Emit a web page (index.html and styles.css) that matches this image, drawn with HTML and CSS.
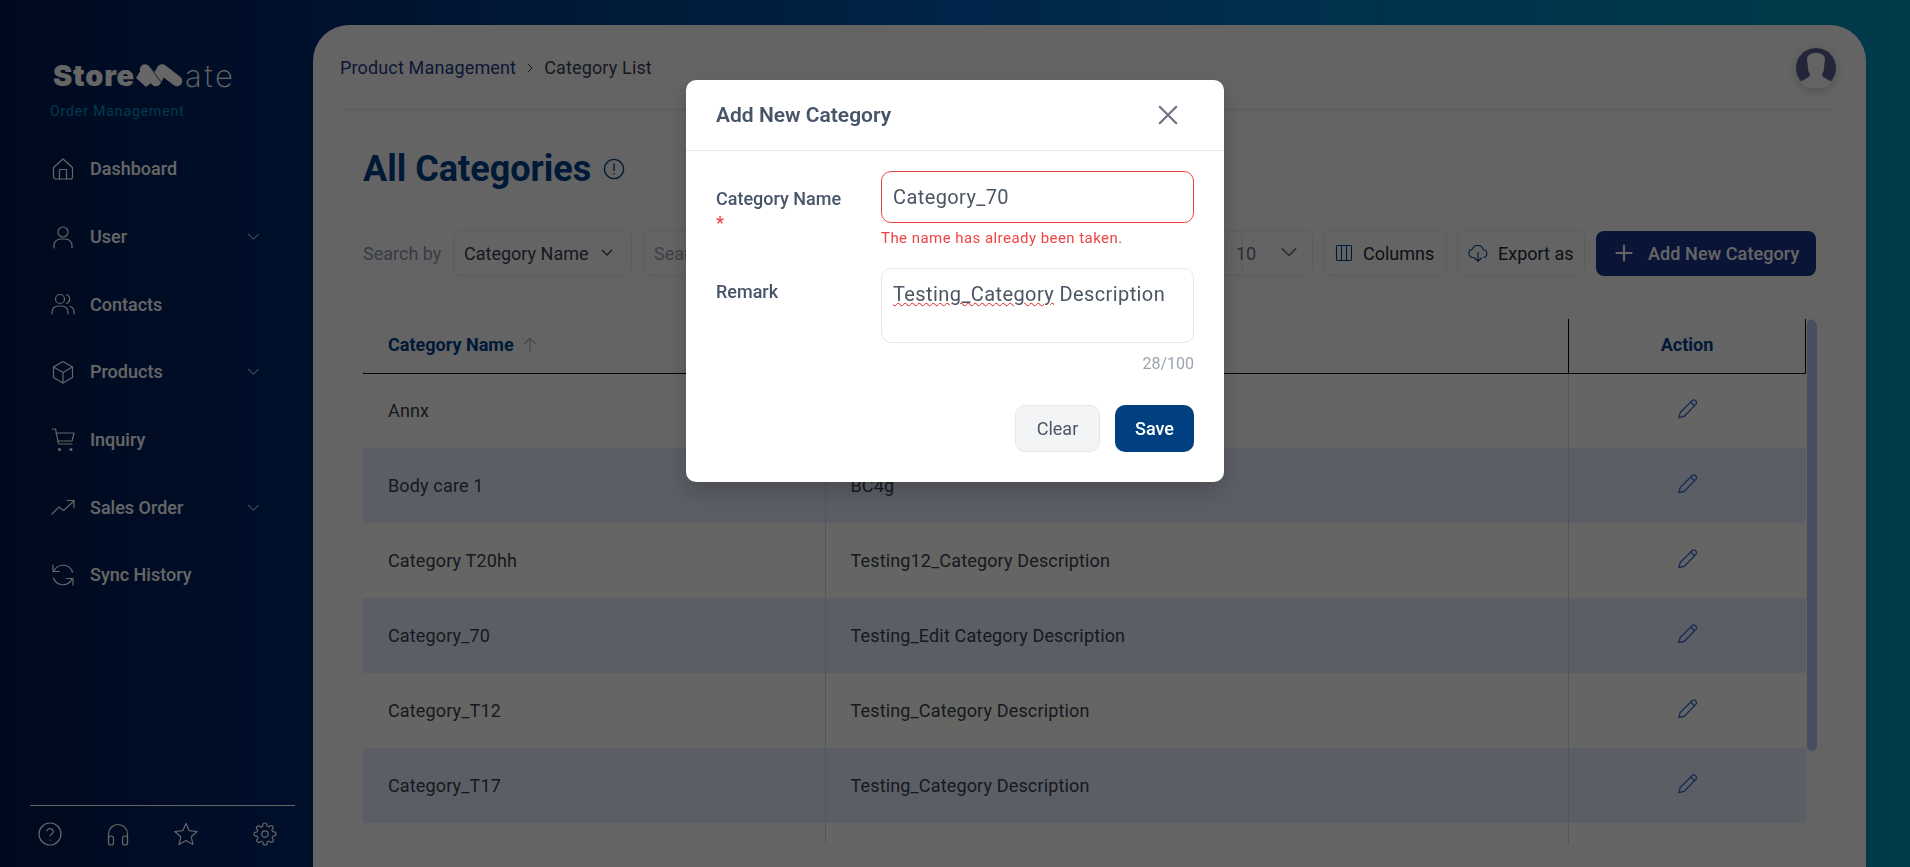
FILE: index.html
```html
<!DOCTYPE html>
<html lang="en">
<head>
    <meta charset="UTF-8">
    <meta name="viewport" content="width=device-width, initial-scale=1.0">
    <title>All Categories</title>
    <link rel="stylesheet" href="styles.css">
</head>
<body>
    <aside class="sidebar">
        <div class="logo">
            <span class="logo-store">Store</span>
            <svg class="logo-mark" viewBox="0 0 48 24"><path class="logo-band" d="M9 6.500 20 18M26 6.500 41 18M20 18l6-11.500"/><path class="logo-wedge" d="M0 15 8 2l7 18-5 4z"/><path class="logo-cut" d="M14 4l11 15"/></svg>
            <span class="logo-ate">ate</span>
        </div>
        <div class="logo-sub">Order Management</div>
        <nav class="nav">
            <a class="nav-item">
                <svg class="icon" viewBox="0 0 24 24"><path d="M2.500 10.500 12 2l9.500 8.500V20a2 2 0 0 1-2 2h-15a2 2 0 0 1-2-2z"/><path d="M8.500 22V12.500h7V22"/></svg>
                <span>Dashboard</span>
            </a>
            <a class="nav-item">
                <svg class="icon" viewBox="0 0 24 24"><circle cx="12" cy="7" r="5"/><path d="M3 23v-2.500a6.500 6.500 0 0 1 6.500-6.500h5a6.500 6.500 0 0 1 6.500 6.500V23"/></svg>
                <span>User</span>
                <svg class="nav-caret" viewBox="0 0 24 24"><path d="m3 8 9 9 9-9"/></svg>
            </a>
            <a class="nav-item">
                <svg class="icon" viewBox="0 0 24 24"><circle cx="9" cy="7" r="4.500"/><path d="M1 22v-2a6 6 0 0 1 6-6h4a6 6 0 0 1 6 6v2"/><path d="M15.500 2.700a4.500 4.500 0 0 1 0 8.600"/><path d="M19 14.300a6 6 0 0 1 4 5.700v2"/></svg>
                <span>Contacts</span>
            </a>
            <a class="nav-item">
                <svg class="icon" viewBox="0 0 24 24"><path d="M12 1.500 21.500 7v10.500L12 23l-9.500-5.500V7z"/><path d="M2.500 7 12 12.500 21.500 7M12 12.500V23"/></svg>
                <span>Products</span>
                <svg class="nav-caret" viewBox="0 0 24 24"><path d="m3 8 9 9 9-9"/></svg>
            </a>
            <a class="nav-item">
                <svg class="icon" viewBox="0 0 24 24"><path d="M1 1h3.500L7.500 16h13.500"/><path d="M5 5h18l-2 8H6.800"/><circle class="dot" cx="8.500" cy="21.500" r="1"/><circle class="dot" cx="20" cy="21.500" r="1"/></svg>
                <span>Inquiry</span>
            </a>
            <a class="nav-item">
                <svg class="icon" viewBox="0 0 24 24"><path d="m1 19 7-7 4.500 3.500L23 6"/><path d="M16 5.500h7v7"/></svg>
                <span>Sales Order</span>
                <svg class="nav-caret" viewBox="0 0 24 24"><path d="m3 8 9 9 9-9"/></svg>
            </a>
            <a class="nav-item">
                <svg class="icon" viewBox="0 0 24 24"><path d="M2 2v6.500h6.500"/><path d="M22 22v-6.500h-6.500"/><path d="M2.500 15a10 10 0 0 0 18.500 1"/><path d="M21.500 9A10 10 0 0 0 3 8"/></svg>
                <span>Sync History</span>
            </a>
        </nav>
        <div class="side-foot">
            <svg class="icon" viewBox="0 0 24 24"><circle cx="12" cy="12" r="11"/><path d="M8.800 8.800a3.300 3.300 0 0 1 6.400 1c0 2.200-3.200 2.500-3.200 4.200"/><path d="M12 18v.2"/></svg>
            <svg class="icon" viewBox="0 0 24 24"><path d="M2.500 21v-9a9.500 9.500 0 0 1 19 0v9"/><rect x="2.500" y="14" width="5" height="9" rx="2.300"/><rect x="16.500" y="14" width="5" height="9" rx="2.300"/></svg>
            <svg class="icon" viewBox="0 0 24 24"><path d="m12 1.500 3.200 7.200 8 .8-6 5.300 1.800 7.700-7-4-7 4 1.800-7.700-6-5.300 8-.8z"/></svg>
            <svg class="icon foot-gear" viewBox="0 0 24 24"><circle cx="12" cy="12" r="3.200"/><path d="M19.400 15a1.650 1.650 0 0 0 .33 1.820l.06.06a2 2 0 1 1-2.830 2.830l-.06-.06a1.650 1.650 0 0 0-2.800 1.170V21a2 2 0 0 1-4 0v-.09a1.650 1.650 0 0 0-2.800-1.110l-.06.06a2 2 0 1 1-2.830-2.830l.06-.06a1.650 1.650 0 0 0-1.170-2.800H3a2 2 0 0 1 0-4h.09a1.650 1.650 0 0 0 1.110-2.800l-.06-.06a2 2 0 1 1 2.830-2.830l.06.06a1.650 1.650 0 0 0 2.800-1.170V3a2 2 0 0 1 4 0v.09a1.650 1.650 0 0 0 2.800 1.110l.06-.06a2 2 0 1 1 2.830 2.830l-.06.06a1.650 1.650 0 0 0 1.170 2.800H21a2 2 0 0 1 0 4h-.09a1.650 1.650 0 0 0-1.510 1.170z"/></svg>
        </div>
    </aside>

    <main class="panel">
        <header class="topbar">
            <div class="crumbs">
                <span class="crumb-link">Product Management</span>
                <svg class="crumb-sep" viewBox="0 0 24 24"><path d="m8 4 8 8-8 8"/></svg>
                <span>Category List</span>
            </div>
            <div class="avatar">
                <svg viewBox="0 0 40 40"><circle class="avatar-bg" cx="20" cy="20" r="20"/><path class="avatar-man" d="M11 11c0-4 4-6 9-6s9 2 9 6l-1 9c0 3-1 5-2 6 0 2 1 3 3 4l7 4a20 20 0 0 1-32 0l7-4c2-1 3-2 3-4-1-1-2-3-2-6z"/></svg>
            </div>
        </header>

        <div class="title-row">
            <h1>All Categories</h1>
            <svg class="title-info" viewBox="0 0 24 24"><circle cx="12" cy="12" r="10.500"/><path d="M12 6.500v7M12 17v.5"/></svg>
        </div>

        <div class="toolbar">
            <span class="search-label">Search by</span>
            <div class="box select-by">Category Name
                <svg class="caret" viewBox="0 0 24 24"><path d="m5 8 7 7 7-7"/></svg>
            </div>
            <div class="box search">Search</div>
            <div class="box select-size">10
                <svg class="caret" viewBox="0 0 24 24"><path d="m4 7 8 8 8-8"/></svg>
            </div>
            <div class="box tool tool-columns">
                <svg class="tool-icon" viewBox="0 0 24 24"><rect x="3" y="3" width="18" height="18" rx="1.500"/><path d="M9 3v18M15 3v18"/></svg>
                Columns
            </div>
            <div class="box tool tool-export">
                <svg class="tool-icon" viewBox="0 0 24 24"><path d="M7 17.500H6a5 5 0 0 1-.8-9.900A7 7 0 0 1 18.500 8 4.800 4.800 0 0 1 19 17.400"/><path d="M12 11v11M8 18l4 4 4-4"/></svg>
                Export as
            </div>
            <button class="add-btn">
                <svg class="plus" viewBox="0 0 24 24"><path d="M12 3v18M3 12h18"/></svg>
                Add New Category
            </button>
        </div>

        <div class="table-wrap">
            <div class="scroll-thumb"></div>
            <table class="table">
                <thead>
                    <tr>
                        <th class="col-name">Category Name
                            <svg class="sort" viewBox="0 0 24 24"><path d="M12 21V3M4 11l8-8 8 8"/></svg>
                        </th>
                        <th class="col-remark"></th>
                        <th class="col-action">Action</th>
                    </tr>
                </thead>
                <tbody id="rows"></tbody>
            </table>
        </div>
    </main>

    <div class="overlay">
        <div class="modal">
            <div class="modal-head">
                <h2>Add New Category</h2>
                <svg class="close" viewBox="0 0 24 24"><path d="M3 3l18 18M21 3 3 21"/></svg>
            </div>
            <div class="modal-body">
                <div class="field">
                    <label class="field-label">Category Name <span class="req">*</span></label>
                    <div class="field-main">
                        <div class="input input-error">Category_70</div>
                        <div class="error">The name has already been taken.</div>
                    </div>
                </div>
                <div class="field field-remark">
                    <label class="field-label">Remark</label>
                    <div class="field-main">
                        <div class="input textarea"><span class="typo">Testing_Category</span> Description</div>
                        <div class="counter">28/100</div>
                    </div>
                </div>
                <div class="modal-actions">
                    <button class="btn-clear">Clear</button>
                    <button class="btn-save">Save</button>
                </div>
            </div>
        </div>
    </div>

    <script>
        const rows = [
            ["Annx", ""],
            ["Body care 1", "BC4g"],
            ["Category T20hh", "Testing12_Category Description"],
            ["Category_70", "Testing_Edit Category Description"],
            ["Category_T12", "Testing_Category Description"],
            ["Category_T17", "Testing_Category Description"],
            ["", ""]
        ];
        const pencil = '<svg class="pencil" viewBox="0 0 24 24"><path d="M17 3.500a3 3 0 0 1 4 4L8 21l-6 1.500L3.500 17z"/><path d="m15 5.500 4 4"/></svg>';
        document.getElementById("rows").innerHTML = rows.map((r) =>
            `<tr><td>${r[0]}</td><td>${r[1]}</td><td class="cell-action">${r[0] ? pencil : ""}</td></tr>`
        ).join("");
    </script>
</body>
</html>
```

FILE: styles.css
```css
* {
    box-sizing: border-box;
}
html, body {
    height: 100%;
}
body {
    margin: 0;
    height: 867px;
    overflow: hidden;
    display: flex;
    font-family: Roboto, "Liberation Sans", sans-serif;
    background: linear-gradient(90deg, #00286e 13%, #00509f 42%, #005cb8 50%, #0078c0 68%, #0094b8 100%);
    color: #374151;
}
svg {
    fill: none;
    stroke: currentColor;
    stroke-linecap: round;
    stroke-linejoin: round;
}

/* sidebar */
.sidebar {
    width: 313px;
    flex-shrink: 0;
    display: flex;
    flex-direction: column;
    background: linear-gradient(90deg, #001a4c 0%, #00286e 100%);
    color: #fff;
}
.logo {
    display: flex;
    align-items: center;
    height: 30px;
    margin: 60px 0 0 53px;
}
.logo-store {
    width: 83px;
    flex-shrink: 0;
    font-family: Inter, Roboto, sans-serif;
    font-size: 29px;
    font-weight: 900;
    letter-spacing: 0.8px;
}
.logo-mark {
    width: 48px;
    height: 24px;
    flex-shrink: 0;
}
.logo-band {
    stroke: #fff;
    stroke-width: 10.500;
}
.logo-wedge {
    fill: #fff;
    stroke: none;
}
.logo-cut {
    stroke: #00236a;
    stroke-width: 0.8;
}
.logo-ate {
    font-family: Inter, sans-serif;
    font-size: 31px;
    font-weight: 200;
    letter-spacing: 2.600px;
    margin-left: 1px;
}
.logo-sub {
    margin: 13px 0 0 50px;
    font-size: 14px;
    letter-spacing: 0.9px;
    color: #0090c0;
}
.nav {
    margin-top: 16px;
    display: flex;
    flex-direction: column;
}
.nav-item {
    display: flex;
    align-items: center;
    height: 67.700px;
    padding: 0 59px 0 51px;
    gap: 15px;
    font-size: 18px;
    font-weight: 500;
}
.icon {
    width: 24px;
    height: 24px;
    stroke-width: 1.200;
    flex-shrink: 0;
}
.dot {
    fill: currentColor;
}
.nav-caret {
    width: 13px;
    height: 13px;
    margin-left: auto;
    margin-right: -6px;
    stroke-width: 1.800;
}
.side-foot {
    margin: auto 18px 0 30px;
    height: 62px;
    border-top: 1px solid #fff;
    display: flex;
    align-items: center;
    gap: 44px;
    padding: 0 0 6px 8px;
}
.foot-gear {
    margin-left: 11px;
}

/* main panel */
.panel {
    width: 1553px;
    height: 842px;
    margin-top: 25px;
    padding: 0 50px;
    background: #f9f9f9;
    border-radius: 36px 36px 0 0;
    overflow: hidden;
}
.topbar {
    display: flex;
    align-items: center;
    justify-content: space-between;
    height: 85px;
    margin: 0 -20px;
    border-bottom: 1px solid #e5e7eb;
    padding-top: 1px;
}
.crumbs {
    display: flex;
    align-items: center;
    gap: 8px;
    font-size: 18px;
    letter-spacing: 0.15px;
    margin-left: -3px;
}
.crumb-link {
    color: #1e3a8a;
}
.crumb-sep {
    width: 12px;
    height: 12px;
    stroke-width: 2;
}
.avatar {
    width: 40px;
    height: 40px;
    border-radius: 50%;
    box-shadow: 0 3px 8px rgba(0, 0, 0, 0.2);
}
.avatar svg {
    display: block;
    stroke: none;
}
.avatar-bg {
    fill: #555f8c;
}
.avatar-man {
    fill: #f9f9f9;
}
.title-row {
    display: flex;
    align-items: center;
    gap: 12px;
    margin-top: 35px;
    height: 48px;
}
h1 {
    margin: 0;
    font-size: 36px;
    font-weight: 700;
    color: #00408a;
}
.title-info {
    width: 22px;
    height: 22px;
    stroke-width: 1.500;
    color: #00408a;
}
.toolbar {
    display: flex;
    align-items: center;
    height: 46px;
    margin-top: 37px;
    font-size: 18px;
}
.search-label {
    width: 90px;
    color: #8a96ad;
}
.box {
    display: flex;
    align-items: center;
    height: 46px;
    border: 1px solid #e5e7eb;
    border-radius: 8px;
    color: #374151;
}
.select-by {
    width: 179px;
    padding-left: 10px;
    gap: 10px;
    margin-right: 11px;
    white-space: nowrap;
}
.caret {
    width: 16px;
    height: 16px;
    stroke-width: 2;
}
.search {
    width: 600px;
    padding-left: 10px;
    color: #9ca3af;
    margin-right: -17px;
}
.select-size {
    width: 87px;
    padding-left: 9px;
    gap: 23px;
    margin-right: 10px;
    color: #6b7280;
}
.select-size .caret {
    width: 20px;
    height: 20px;
}
.tool {
    gap: 9px;
    margin-right: 10px;
    color: #1f2937;
    white-space: nowrap;
}
.tool-columns {
    width: 124px;
    padding-left: 10px;
}
.tool-export {
    width: 128px;
    padding-left: 10px;
    gap: 10px;
}
.tool-icon {
    width: 20px;
    height: 20px;
    flex-shrink: 0;
    stroke-width: 1.300;
    color: #00408a;
}
.add-btn {
    width: 220px;
    height: 45px;
    margin-left: 1px;
    display: flex;
    align-items: center;
    gap: 14px;
    padding: 0 18px;
    border: none;
    border-radius: 8px;
    background: #1a348a;
    color: #fff;
    font: 500 18px Roboto, sans-serif;
    letter-spacing: 0.1px;
    white-space: nowrap;
}
.plus {
    width: 20px;
    height: 20px;
    stroke-width: 2.600;
    flex-shrink: 0;
}

/* table */
.table-wrap {
    position: relative;
    margin-top: 43px;
    height: 525px;
    width: 1454px;
    padding-right: 11px;
    background: #fafafa;
    border-radius: 8px 8px 0 0;
    overflow: hidden;
}
.scroll-thumb {
    position: absolute;
    top: 0;
    right: 0;
    width: 10px;
    height: 432px;
    border-radius: 5px;
    background: #b0c4f0;
}
.table {
    width: 100%;
    table-layout: fixed;
    border-collapse: collapse;
    font-size: 18px;
    letter-spacing: 0.15px;
    color: #374151;
}
.table th {
    height: 54px;
    font-size: 18px;
    font-weight: 700;
    letter-spacing: 0;
    color: #00408a;
    text-align: left;
    padding: 0 25px 3px;
    background: #f9f9f9;
    border-bottom: 1px solid #000;
}
.col-name {
    width: 462px;
}
.table .col-action {
    width: 237px;
    text-align: center;
    border-left: 1px solid #000;
    border-right: 1px solid #000;
}
.sort {
    width: 18px;
    height: 18px;
    margin-left: 3px;
    color: #b0b0b0;
    stroke-width: 1.500;
    vertical-align: -3px;
}
.table td {
    height: 75px;
    padding: 0 25px;
    border-right: 1px solid #c8d8f4;
}
.table td:last-child {
    border-right: none;
}
.table tbody tr:nth-child(even) td {
    background: #e4ebfb;
}
.table tbody tr:nth-child(odd) td {
    background: #fdfdfa;
}
.cell-action {
    text-align: center;
}
.pencil {
    width: 22px;
    height: 22px;
    stroke-width: 1.500;
    color: #3b6bd6;
    vertical-align: 2px;
    margin-left: 2px;
}

/* modal */
.overlay {
    position: fixed;
    inset: 0;
    display: flex;
    justify-content: center;
    align-items: flex-start;
    padding-top: 80px;
    background: rgba(0, 0, 0, 0.6);
}
.modal {
    width: 538px;
    height: 402px;
    background: #fff;
    border-radius: 10px;
    box-shadow: 0 10px 25px rgba(0, 0, 0, 0.2);
}
.modal-head {
    display: flex;
    align-items: center;
    justify-content: space-between;
    height: 71px;
    padding: 0 45px 1px 30px;
    border-bottom: 1px solid #e5e7eb;
}
h2 {
    margin: 0;
    font-size: 21px;
    font-weight: 600;
    color: #475569;
}
.close {
    width: 22px;
    height: 22px;
    color: #6b7280;
    stroke-width: 2.400;
}
.modal-body {
    padding: 20px 30px 0;
}
.field {
    display: flex;
}
.field-remark {
    margin-top: 21px;
}
.field-label {
    width: 165px;
    flex-shrink: 0;
    padding-top: 16px;
    font-size: 18px;
    font-weight: 500;
    line-height: 24px;
    color: #475569;
}
.field-remark .field-label {
    padding-top: 12px;
}
.req {
    display: block;
    color: #ef4444;
}
.field-main {
    flex: 1;
}
.input {
    height: 52px;
    padding: 0 11px;
    display: flex;
    align-items: center;
    border: 1px solid #e5e7eb;
    border-radius: 10px;
    font-size: 20px;
    letter-spacing: 0.4px;
    color: #4b5563;
}
.input-error {
    border-color: #ef4444;
}
.error {
    margin-top: 6px;
    font-size: 15px;
    line-height: 18px;
    letter-spacing: 0.45px;
    color: #ef4444;
}
.textarea {
    display: block;
    height: 75px;
    padding-top: 12px;
    line-height: 26px;
}
.typo {
    text-decoration: underline wavy #e02020 1px;
    text-underline-offset: 1px;
}
.counter {
    margin-top: 12px;
    font-size: 16px;
    line-height: 18px;
    text-align: right;
    color: #9ca3af;
}
.modal-actions {
    display: flex;
    justify-content: flex-end;
    gap: 15px;
    margin-top: 32px;
}
.modal-actions button {
    height: 47px;
    border-radius: 10px;
    font: 500 18px Roboto, sans-serif;
}
.modal-actions .btn-clear {
    width: 85px;
    background: #f3f4f6;
    border: 1px solid #e5e7eb;
    color: #4b5563;
    font-weight: 400;
}
.btn-save {
    width: 79px;
    background: #004080;
    border: none;
    color: #fff;
}
```
